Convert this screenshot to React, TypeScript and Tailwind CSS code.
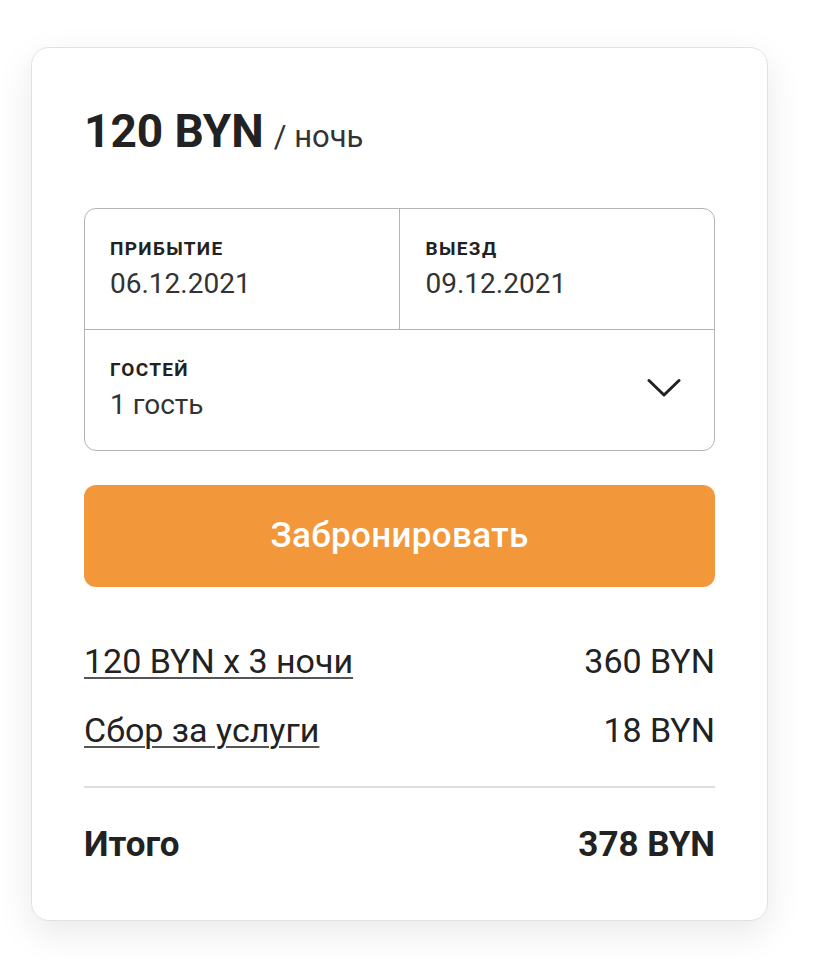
import React from 'react';

const font = { fontFamily: 'Roboto, "Liberation Sans", sans-serif' };

const PriceRow = ({ label, value }: { label: string; value: string }) => (
  <div className="flex items-center justify-between text-[34px] leading-none text-[#222]">
    <span className="underline decoration-[1.5px] underline-offset-[4px] decoration-[#555]">{label}</span>
    <span>{value}</span>
  </div>
);

const Field = ({ label, value }: { label: string; value: string }) => (
  <>
    <div className="text-[19px] font-bold uppercase leading-none tracking-[0.07em] text-[#222]">{label}</div>
    <div className="mt-[12px] text-[28px] leading-none text-[#333]">{value}</div>
  </>
);

/**
 * Booking card with dates, guests and price summary
 */
export default function App() {
  return (
    <div className="min-h-screen bg-white pt-[47px] pl-[31px]" style={font}>
      <div className="w-[737px] rounded-[18px] border border-[#e2e2e2] bg-white px-[52px] pt-[60px] pb-[58px] shadow-[0_12px_36px_rgba(0,0,0,0.09)]">
        {/* Price per night */}
        <div className="flex items-baseline text-[#222]">
          <span className="text-[46px] font-bold leading-none">120 BYN</span>
          <span className="ml-[10px] text-[31px] leading-none text-[#333]">/ ночь</span>
        </div>

        {/* Dates & guests */}
        <div className="mt-[54px] rounded-[12px] border border-[#b3b3b3]">
          <div className="grid grid-cols-2 border-b border-[#b3b3b3]">
            <div className="h-[120px] border-r border-[#b3b3b3] px-[25px] pt-[30px]">
              <Field label="Прибытие" value="06.12.2021" />
            </div>
            <div className="h-[120px] px-[26px] pt-[30px]">
              <Field label="Выезд" value="09.12.2021" />
            </div>
          </div>
          <div className="flex h-[120px] items-center justify-between pl-[25px] pr-[33px]">
            <div className="self-start pt-[30px]">
              <Field label="Гостей" value="1 гость" />
            </div>
            <svg width="34" height="20" viewBox="0 0 34 20" fill="none" className="-mt-[4px]">
              <path d="M2 2.5L17 17L32 2.5" stroke="#222" strokeWidth="3" strokeLinecap="round" strokeLinejoin="round" />
            </svg>
          </div>
        </div>

        <button
          type="button"
          className="mt-[34px] flex h-[102px] w-full items-center justify-center rounded-[12px] bg-[#f2973a] text-[35px] font-medium tracking-[0.01em] text-white"
        >
          Забронировать
        </button>

        {/* Price breakdown */}
        <div className="mt-[57px] flex flex-col gap-[35px]">
          <PriceRow label="120 BYN x 3 ночи" value="360 BYN" />
          <PriceRow label="Сбор за услуги" value="18 BYN" />
        </div>

        <div className="mt-[39px] h-[2px] bg-[#dedede]" />

        <div className="mt-[39px] flex items-center justify-between text-[35px] font-bold leading-none text-[#222]">
          <span>Итого</span>
          <span>378 BYN</span>
        </div>
      </div>
    </div>
  );
}
